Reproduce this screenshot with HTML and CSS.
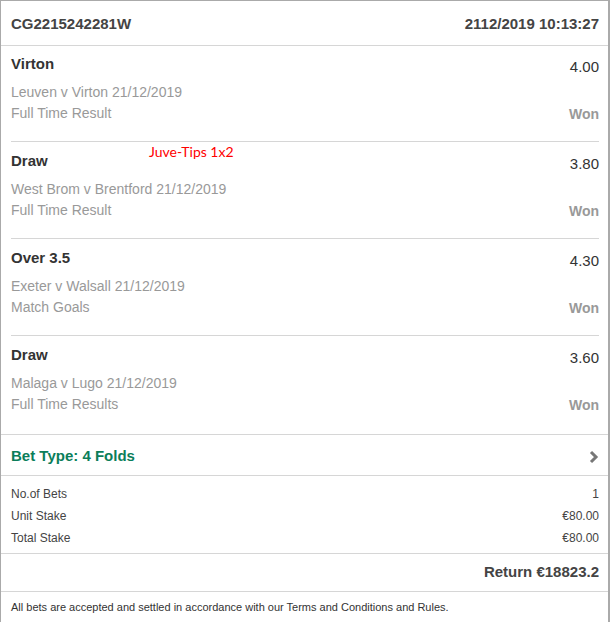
FILE: index.html
```html
<!DOCTYPE html>
<html lang="en">
<head>
    <meta charset="UTF-8">
    <meta name="viewport" content="width=device-width, initial-scale=1.0">
    <title>Bet Receipt</title>
    <link rel="stylesheet" href="styles.css">
</head>
<body>
    <div class="slip">
        <div class="slip-header">
            <span>CG2215242281W</span>
            <span>2112/2019 10:13:27</span>
        </div>

        <div class="selections">
            <div class="selection">
                <div class="sel-top">
                    <span class="sel-name">Virton</span>
                    <span class="sel-odds">4.00</span>
                </div>
                <div class="sel-line">Leuven v Virton 21/12/2019</div>
                <div class="sel-line sel-last">
                    <span>Full Time Result</span>
                    <span class="sel-result">Won</span>
                </div>
            </div>

            <div class="selection">
                <div class="sel-top">
                    <span class="sel-name">Draw</span>
                    <span class="sel-odds">3.80</span>
                </div>
                <div class="sel-line">West Brom v Brentford 21/12/2019</div>
                <div class="sel-line sel-last">
                    <span>Full Time Result</span>
                    <span class="sel-result">Won</span>
                </div>
            </div>

            <div class="selection">
                <div class="sel-top">
                    <span class="sel-name">Over 3.5</span>
                    <span class="sel-odds">4.30</span>
                </div>
                <div class="sel-line">Exeter v Walsall 21/12/2019</div>
                <div class="sel-line sel-last">
                    <span>Match Goals</span>
                    <span class="sel-result">Won</span>
                </div>
            </div>

            <div class="selection">
                <div class="sel-top">
                    <span class="sel-name">Draw</span>
                    <span class="sel-odds">3.60</span>
                </div>
                <div class="sel-line">Malaga v Lugo 21/12/2019</div>
                <div class="sel-line sel-last">
                    <span>Full Time Results</span>
                    <span class="sel-result">Won</span>
                </div>
            </div>
        </div>

        <div class="bet-type">
            <span>Bet Type: 4 Folds</span>
            <svg class="chevron" width="10" height="14" viewBox="0 0 10 14">
                <polyline points="2,2 7,7 2,12" fill="none" stroke="#777" stroke-width="3"/>
            </svg>
        </div>

        <div class="summary">
            <div class="summary-row"><span>No.of Bets</span><span>1</span></div>
            <div class="summary-row"><span>Unit Stake</span><span>€80.00</span></div>
            <div class="summary-row"><span>Total Stake</span><span>€80.00</span></div>
        </div>

        <div class="return">Return €18823.2</div>

        <div class="terms">All bets are accepted and settled in accordance with our Terms and Conditions and Rules.</div>

        <div class="watermark">Juve-Tips 1x2</div>
    </div>
</body>
</html>
```

FILE: styles.css
```css
body {
    margin: 0;
    padding: 0;
    background-color: #fff;
    font-family: "Liberation Sans", Arial, sans-serif;
}

.slip {
    position: relative;
    width: 607px;
    border: 1px solid #aaa;
    border-right-width: 2px;
    border-bottom: none;
    color: #333;
}

.slip-header {
    display: flex;
    justify-content: space-between;
    align-items: center;
    height: 44px;
    padding: 0 9px 0 10px;
    border-bottom: 1px solid #d6d6d6;
    font-size: 15px;
    font-weight: bold;
    color: #444;
}

.selection {
    margin: 0 9px 0 10px;
    padding: 9px 0 17px;
    border-bottom: 1px solid #d6d6d6;
}

.selection:first-child {
    padding-top: 8px;
}

.selection:last-child {
    margin: 0;
    padding: 9px 9px 19px 10px;
}

.sel-top {
    display: flex;
    justify-content: space-between;
    align-items: flex-start;
    height: 20px;
    line-height: 20px;
    margin-bottom: 8px;
}

.sel-name {
    font-size: 15px;
    font-weight: bold;
}

.sel-odds {
    font-size: 15px;
    margin-top: 3px;
}

.sel-line {
    font-size: 14px;
    line-height: 21px;
    color: #999;
}

.sel-last {
    display: flex;
    justify-content: space-between;
    align-items: flex-start;
    height: 21px;
}

.sel-result {
    font-weight: bold;
    margin-top: 1px;
}

.bet-type {
    display: flex;
    justify-content: space-between;
    align-items: center;
    height: 40px;
    padding: 0 9px 0 10px;
    border-bottom: 1px solid #d6d6d6;
    font-size: 15px;
    font-weight: bold;
    color: #0b7e5a;
}

.chevron {
    margin-top: 3px;
}

.summary {
    padding: 7px 9px 4px 10px;
    border-bottom: 1px solid #d6d6d6;
    font-size: 12px;
    color: #444;
}

.summary-row {
    display: flex;
    justify-content: space-between;
    line-height: 22px;
}

.return {
    height: 37px;
    line-height: 36px;
    padding: 0 9px 0 10px;
    text-align: right;
    border-bottom: 1px solid #d6d6d6;
    font-size: 15px;
    font-weight: bold;
    color: #444;
}

.terms {
    padding: 9px 10px;
    font-size: 11px;
    color: #333;
}

.watermark {
    position: absolute;
    left: 148px;
    top: 142px;
    font-family: Lato, sans-serif;
    font-size: 14px;
    color: #f00;
}
```
